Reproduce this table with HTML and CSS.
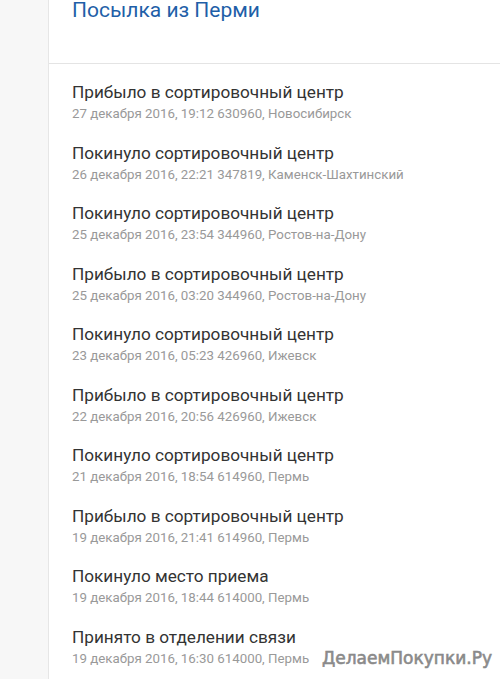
FILE: index.html
```html
<!DOCTYPE html>
<html lang="ru">
<head>
<meta charset="utf-8">
<link rel="stylesheet" href="styles.css">
</head>
<body>
<div class="page">
  <aside class="side"></aside>
  <main class="card">
    <header class="head"><h1 class="title">Посылка из Перми</h1></header>
    <ul class="list">
      <li class="item"><div class="op">Прибыло в сортировочный центр</div><div class="meta">27 декабря 2016, 19:12 630960, Новосибирск</div></li>
      <li class="item"><div class="op">Покинуло сортировочный центр</div><div class="meta">26 декабря 2016, 22:21 347819, Каменск-Шахтинский</div></li>
      <li class="item"><div class="op">Покинуло сортировочный центр</div><div class="meta">25 декабря 2016, 23:54 344960, Ростов-на-Дону</div></li>
      <li class="item"><div class="op">Прибыло в сортировочный центр</div><div class="meta">25 декабря 2016, 03:20 344960, Ростов-на-Дону</div></li>
      <li class="item"><div class="op">Покинуло сортировочный центр</div><div class="meta">23 декабря 2016, 05:23 426960, Ижевск</div></li>
      <li class="item"><div class="op">Прибыло в сортировочный центр</div><div class="meta">22 декабря 2016, 20:56 426960, Ижевск</div></li>
      <li class="item"><div class="op">Покинуло сортировочный центр</div><div class="meta">21 декабря 2016, 18:54 614960, Пермь</div></li>
      <li class="item"><div class="op">Прибыло в сортировочный центр</div><div class="meta">19 декабря 2016, 21:41 614960, Пермь</div></li>
      <li class="item"><div class="op">Покинуло место приема</div><div class="meta">19 декабря 2016, 18:44 614000, Пермь</div></li>
      <li class="item"><div class="op">Принято в отделении связи</div><div class="meta">19 декабря 2016, 16:30 614000, Пермь</div></li>
    </ul>
  </main>
</div>
<div class="watermark">ДелаемПокупки.Ру</div>
</body>
</html>
```
FILE: styles.css
```css
html, body { margin: 0; padding: 0; }
body { background: #fff; font-family: Roboto, "Noto Sans", sans-serif; width: 500px; height: 679px; overflow: hidden; position: relative; }
.page { display: flex; height: 679px; }
.side { width: 48px; flex: none; background: #f7f7f7; border-right: 1px solid #e6e6e6; }
.card { flex: 1; background: #fff; }
.head { height: 64px; border-bottom: 1px solid #e4e4e4; box-sizing: border-box; padding-left: 23px; }
.title { margin: 0; font-size: 21px; font-weight: 400; color: #1f5fa8; line-height: 20px; }
.list { list-style: none; margin: 0; padding: 17px 0 0 23px; }
.item { height: 60.5px; }
.op { font-size: 17.2px; color: #333; line-height: 22px; }
.meta { font-size: 13.3px; color: #999; line-height: 20px; margin-top: 1px; }
.watermark { position: absolute; left: 322px; top: 648px; font-family: "DejaVu Sans", sans-serif; font-size: 17px; color: #8a8a8a; -webkit-text-stroke: 0.6px #8a8a8a; white-space: nowrap; }
```
